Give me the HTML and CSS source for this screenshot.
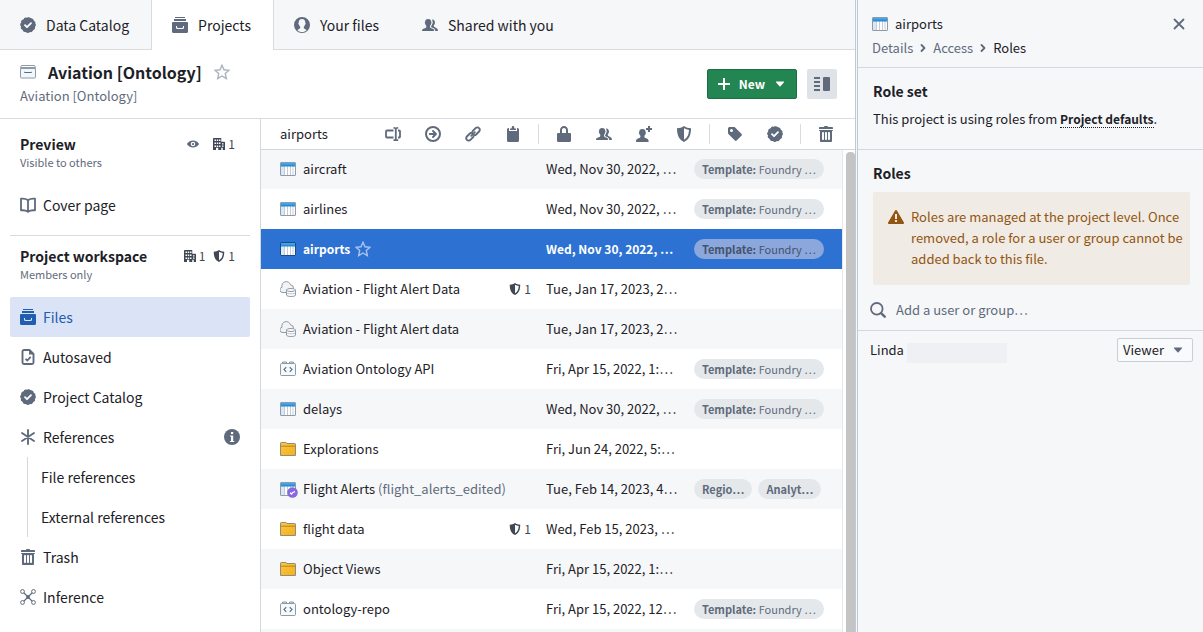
FILE: index.html
```html
<!DOCTYPE html>
<html lang="en">
<head>
<meta charset="utf-8">
<title>Aviation [Ontology] – Projects</title>
<link rel="stylesheet" href="styles.css">
</head>
<body>
<svg class="sprite" aria-hidden="true">
  <defs>
    <linearGradient id="g-blue" x1="0" y1="0" x2="0" y2="1"><stop offset="0" stop-color="#48aff0"/><stop offset="1" stop-color="#1f82cc"/></linearGradient>
    <linearGradient id="g-folder" x1="0" y1="0" x2="1" y2="1"><stop offset="0" stop-color="#fcc641"/><stop offset="1" stop-color="#f2b01e"/></linearGradient>
  </defs>
  <symbol id="endorsed" viewBox="0 0 16 16"><circle cx="8" cy="8" r="7.4"/><circle cx="8" cy="8" r="6.200" fill="none" stroke="currentColor" stroke-width="3.400" stroke-linecap="round" stroke-dasharray="0 3.246"/><path d="M5 8.200l2 2 4-4" fill="none" stroke="#fff" stroke-width="1.800" stroke-linecap="round" stroke-linejoin="round"/></symbol>
  <symbol id="projects" viewBox="0 0 16 16"><path d="M3 0h10v1H3zM2 2h12v2H2z"/><path fill-rule="evenodd" d="M1 5h14a1 1 0 0 1 1 1v8.500a1.500 1.500 0 0 1-1.500 1.500h-13A1.500 1.500 0 0 1 0 14.500V6a1 1 0 0 1 1-1zm3 4v1.500A1.500 1.500 0 0 0 5.500 12h5a1.500 1.500 0 0 0 1.500-1.500V9h-1v1a1 1 0 0 1-1 1H6a1 1 0 0 1-1-1V9z"/></symbol>
  <symbol id="user" viewBox="0 0 16 16"><path fill-rule="evenodd" d="M8 0a8 8 0 1 1 0 16A8 8 0 0 1 8 0zm0 2C5.800 2 4.600 3.600 4.700 5.700c-.5.200-.4 1.500.2 1.900.2 1 .7 1.700 1.300 2.200v1.200c-.3.900-1.700 1.200-2.900 1.900C4.500 14.200 6 15 8 15s3.500-.8 4.700-2.100c-1.200-.7-2.600-1-2.900-1.900V9.800c.6-.5 1.100-1.200 1.300-2.200.6-.4.700-1.700.2-1.900C11.400 3.600 10.200 2 8 2z"/></symbol>
  <symbol id="people" viewBox="0 0 16 16"><path d="M6.200 1.900c2 0 3.100 1.200 3 3.100.5.100.4 1.400-.1 1.800-.2.900-.6 1.500-1.100 2v1.100c.2 1 2 1.300 3.200 2.100.7.400.9 1.200.9 2H0c0-.8.300-1.600 1-2 1.200-.8 3.100-1.100 3.300-2.100V8.800c-.5-.5-.9-1.100-1.100-2-.5-.4-.6-1.700-.1-1.800-.1-1.900 1.100-3.100 3.100-3.100z"/><path d="M9.900 2.500c1.800-.3 2.900.7 2.900 2.600.4.200.3 1.200-.1 1.600-.2.700-.5 1.200-.9 1.600v1c.2.800 1.800 1.200 2.900 1.900.8.500 1.200 1.300 1.300 2.800h-2.800c-.1-1.200-.5-2.100-1.500-2.700-.9-.5-2-.9-2.600-1.400V9c.5-.5.8-1 1-1.700.7-.7.800-2 .4-2.700.1-.8-.1-1.500-.6-2.100z"/></symbol>
  <symbol id="new-person" viewBox="0 0 16 16"><path d="M6.400 3c2.100 0 3.300 1.200 3.200 3.200.5.100.4 1.400-.1 1.700-.2.900-.6 1.400-1.100 1.900V11c.2 1 2.100 1.300 3.300 2.100.7.500.9 1.300.9 2.900H0c0-1.600.300-2.400 1-2.900C2.200 12.300 4.200 12 4.400 11V9.800c-.5-.5-.9-1-1.100-1.900-.5-.3-.6-1.600-.1-1.700C3.100 4.200 4.300 3 6.400 3z"/><path d="M12 0h2v2h2v2h-2v2h-2V4h-2V2h2z"/></symbol>
  <symbol id="project-box" viewBox="0 0 16 16"><path d="M.5 4.500h15V13a1 1 0 0 1-1 1h-13a1 1 0 0 1-1-1z" fill="#f1f8fd" stroke="#8f99a8"/><path d="M1.500 1.500h13l1 2H.5z" fill="#fff" stroke="#8f99a8"/><path d="M4.500 7.800v.7h7v-.7" fill="none" stroke="#5f6b7c"/></symbol>
  <symbol id="star" viewBox="0 0 16 16"><path d="M8 1.300l2 4.500 5 .5-3.700 3.300 1 4.900L8 12l-4.300 2.500 1-4.900L1 6.300l5-.5z" fill="none" stroke="currentColor" stroke-width="1.400" stroke-linejoin="miter"/></symbol>
  <symbol id="plus" viewBox="0 0 16 16"><path d="M7 2h2v5h5v2H9v5H7V9H2V7h5z"/></symbol>
  <symbol id="caret" viewBox="0 0 16 16"><path d="M4.300 5.500h7.400c.4 0 .6.500.3.800L8.500 10.200a.7.7 0 0 1-1 0L4 6.300c-.3-.3-.1-.8.300-.8z"/></symbol>
  <symbol id="detail" viewBox="0 0 16 16"><path d="M0 1h6v2H0zM0 5h6v2H0zM0 9h6v2H0zM0 13h6v2H0z"/><rect x="9" y="1" width="7" height="14" rx="1"/></symbol>
  <symbol id="eye" viewBox="0 0 16 16"><path fill-rule="evenodd" d="M8 3.200c3.700 0 6.500 2.300 7.900 4.400.2.300.2.500 0 .8-1.400 2.100-4.200 4.400-7.900 4.400S1.500 10.500.1 8.400c-.2-.3-.2-.5 0-.8C1.500 5.500 4.300 3.200 8 3.200zM8 5a3 3 0 1 0 0 6 3 3 0 0 0 0-6z"/><circle cx="8" cy="8" r="1.500"/></symbol>
  <symbol id="office" viewBox="0 0 16 16"><path fill-rule="evenodd" d="M1 0h10v5h4a1 1 0 0 1 1 1v10h-3v-3h-2v3H7v-3H4v3H0V1a1 1 0 0 1 1-1zm1 2v2h2V2zm3 0v2h2V2zm3 0v2h2V2zM2 6v2h2V6zm3 0v2h2V6zm3 0v2h2V6zm-6 4v2h2v-2zm3 0v2h2v-2zm3 0v2h2v-2zm4-3v1.500h2V7zm0 3v1.500h2V10z"/></symbol>
  <symbol id="shield" viewBox="0 0 16 16"><path fill-rule="evenodd" d="M8 0c2 1.500 4.300 2.200 7 2.300-.1 6.200-1.200 10.800-7 13.700C2.200 13.100 1.100 8.500 1 2.300 3.700 2.200 6 1.500 8 0zm0 2.300v11.400c3.600-2.200 4.800-5.200 5-9.700-1.900-.200-3.500-.8-5-1.700z"/></symbol>
  <symbol id="book" viewBox="0 0 16 16"><path d="M8 3.200C6.300 1.800 3.700 1.500 1 1.700v11.600c2.700-.2 5.300.1 7 1.500 1.700-1.400 4.300-1.700 7-1.500V1.700c-2.700-.2-5.300.1-7 1.500zm0 0v11.500" fill="none" stroke="currentColor" stroke-width="1.800" stroke-linejoin="round"/></symbol>
  <symbol id="saved" viewBox="0 0 16 16"><path d="M9.500 1H4a1.500 1.500 0 0 0-1.500 1.500v11A1.500 1.500 0 0 0 4 15h8a1.500 1.500 0 0 0 1.500-1.500V5z" fill="none" stroke="currentColor" stroke-width="1.900" stroke-linejoin="round"/><path d="M9 .500L14 5.500H9z"/><path d="M5.500 9.800l1.800 1.700 3.400-3.600" fill="none" stroke="currentColor" stroke-width="1.800"/></symbol>
  <symbol id="asterisk" viewBox="0 0 16 16"><path d="M8 1v14M2 4l12 8M14 4L2 12" fill="none" stroke="currentColor" stroke-width="1.900" stroke-linecap="round"/></symbol>
  <symbol id="info" viewBox="0 0 16 16"><circle cx="8" cy="8" r="8"/><path d="M7 3h2.200v2H7zM6 6.500h3.200V12h1v1H6v-1h1V7.500H6z" fill="#fff"/></symbol>
  <symbol id="trash" viewBox="0 0 16 16"><path fill-rule="evenodd" d="M14.490 3.990h-13c-.28 0-.5.220-.5.500s.22.500.5.500h.5v10c0 .55.45 1 1 1h10c.55 0 1-.45 1-1v-10h.5c.28 0 .5-.22.5-.5s-.22-.5-.5-.5zm-8.500 9c0 .55-.45 1-1 1s-1-.45-1-1v-6c0-.55.45-1 1-1s1 .45 1 1v6zm3 0c0 .55-.45 1-1 1s-1-.45-1-1v-6c0-.55.45-1 1-1s1 .45 1 1v6zm3 0c0 .55-.45 1-1 1s-1-.45-1-1v-6c0-.55.45-1 1-1s1 .45 1 1v6zm2-12h-4c0-.55-.45-1-1-1h-2c-.55 0-1 .45-1 1h-4c-.55 0-1 .45-1 1v1h14v-1c0-.55-.45-1-1-1z"/></symbol>
  <symbol id="graph" viewBox="0 0 16 16"><path d="M3.500 3.500L8 8l4.500-4.500M3.500 12.500L8 8l4.500 4.500" fill="none" stroke="currentColor" stroke-width="1.200"/><circle cx="8" cy="8" r="1.900"/><g fill="#fff" stroke="currentColor"><circle cx="2.500" cy="2.500" r="1.900"/><circle cx="13.500" cy="2.500" r="1.900"/><circle cx="2.500" cy="13.500" r="1.900"/><circle cx="13.500" cy="13.500" r="1.900"/></g></symbol>
  <symbol id="rename" viewBox="0 0 16 16"><path d="M8.500 4.500H2a1 1 0 0 0-1 1v5a1 1 0 0 0 1 1h6.500M13 4.500h1.200a.8.800 0 0 1 .8.800v5.400a.8.800 0 0 1-.8.800H13M8.500 1.800c1.300 0 2.300.2 2.300 1v10.400c0 .8-1 1-2.300 1M13.200 1.800c-1.300 0-2.400.2-2.400 1M10.800 13.200c0 .8 1.100 1 2.400 1" fill="none" stroke="currentColor" stroke-width="1.800"/></symbol>
  <symbol id="move" viewBox="0 0 16 16"><circle cx="8" cy="8" r="7" fill="none" stroke="currentColor" stroke-width="2"/><path d="M4.800 8h5.500M8 5L11 8 8 11" fill="none" stroke="currentColor" stroke-width="1.900" stroke-linecap="round" stroke-linejoin="round"/></symbol>
  <symbol id="link" viewBox="0 0 16 16"><g fill="none" stroke="currentColor" stroke-width="1.900" stroke-linecap="round"><path d="M7.600 5.200l3-3.100a2.400 2.400 0 0 1 3.500 0 2.400 2.400 0 0 1 0 3.400l-3 3a2.400 2.400 0 0 1-2.700.5M8.400 10.800l-3 3.100a2.400 2.400 0 0 1-3.500 0 2.400 2.400 0 0 1 0-3.400l3-3a2.400 2.400 0 0 1 2.700-.5M6.200 9.800l3.600-3.600"/></g></symbol>
  <symbol id="clipboard" viewBox="0 0 16 16"><path d="M4 2v3h8V2h.500A1.500 1.500 0 0 1 14 3.500v11a1.500 1.500 0 0 1-1.500 1.500h-9A1.500 1.500 0 0 1 2 14.500v-11A1.500 1.500 0 0 1 3.500 2z"/><path d="M5 4V2.500h1.500L7 .500A1.200 1.200 0 0 1 9 .500l.5 2H11V4z"/></symbol>
  <symbol id="lock" viewBox="0 0 16 16"><path fill-rule="evenodd" d="M13.960 7H12V3.950C12 1.770 10.210 0 8 0S4 1.770 4 3.950V7H1.960c-.55 0-.96.35-.96.9v6.910c0 .54.41 1.190.96 1.190h12c.55 0 1.040-.65 1.040-1.190V7.900c0-.55-.49-.9-1.040-.9zM6 7V3.950c0-1.090.9-1.970 2-1.970s2 .88 2 1.970V7H6z"/></symbol>
  <symbol id="tag" viewBox="0 0 16 16"><path fill-rule="evenodd" d="M1 2.500A1.500 1.500 0 0 1 2.500 1H7c.4 0 .8.200 1.100.4l6.500 6.500c.5.500.5 1.200 0 1.700l-5 5c-.5.500-1.200.5-1.700 0L1.400 8.100C1.200 7.800 1 7.400 1 7zM4.500 3a1.500 1.500 0 1 0 0 3 1.500 1.500 0 0 0 0-3z"/></symbol>
  <symbol id="table" viewBox="0 0 16 16"><rect x=".5" y="1.500" width="15" height="13" rx=".5" fill="#fff"/><path d="M1 5h3v9H1z" fill="#d6e8f7"/><path d="M4.500 5v9M7.500 5v9M10.500 5v9M13 5v9" stroke="#c5cbd3"/><path d="M1 2h14v3.500H1z" fill="url(#g-blue)"/><rect x=".5" y="1.500" width="15" height="13" rx=".5" fill="none" stroke="currentColor"/></symbol>
  <symbol id="sync" viewBox="0 0 16 16"><path d="M6 11.500H3A2.700 2.700 0 0 1 2 6.200 4.400 4.400 0 0 1 10.500 3.800 3.400 3.400 0 0 1 13.500 7.500" fill="#f1f3f5" stroke="#8f99a8"/><path d="M6.500 9v5c0 2 9 2 9 0V9z" fill="#fff" stroke="#8f99a8"/><ellipse cx="11" cy="9" rx="4.500" ry="1.500" fill="#fff" stroke="#8f99a8"/><path d="M6.500 11.500c0 1.800 9 1.800 9 0" fill="none" stroke="#abb3bf" stroke-width=".8"/></symbol>
  <symbol id="repo" viewBox="0 0 16 16"><path d="M2.500 3V1h4v2M9.500 3V1h4v2" fill="#dbe3ea" stroke="#8f99a8"/><rect x=".5" y="2.500" width="15" height="12" rx="1" fill="#f4f9fc" stroke="#8f99a8"/><path d="M6.300 6.200L4 8.500l2.300 2.300M9.700 6.200L12 8.500l-2.300 2.300" fill="none" stroke="#5f6b7c" stroke-width="1.100"/></symbol>
  <symbol id="folder" viewBox="0 0 16 16"><path d="M.5 2.200c0-.4.300-.7.700-.7h4.600l1.200 1h7.800c.4 0 .7.300.7.700V14.500H.5z" fill="url(#g-folder)" stroke="#8f8c80"/><path d="M1 5.200h14" stroke="#b07f16" stroke-width=".9"/></symbol>
  <symbol id="object-table" viewBox="0 0 19 17"><use href="#table" width="16" height="16"/><circle cx="12.500" cy="11.500" r="5.300" fill="#8768e0"/><path d="M10 11.800l1.500 1.200 1-1.300 2.500-1.200" fill="none" stroke="#fff" stroke-width="1.300"/></symbol>
  <symbol id="cross" viewBox="0 0 16 16"><path d="M3.500 3.500l9 9M12.500 3.500l-9 9" fill="none" stroke="currentColor" stroke-width="1.800" stroke-linecap="round"/></symbol>
  <symbol id="chevron" viewBox="0 0 16 16"><path d="M6.500 5L9.500 8l-3 3" fill="none" stroke="currentColor" stroke-width="1.800" stroke-linecap="round" stroke-linejoin="round"/></symbol>
  <symbol id="warning" viewBox="0 0 16 16"><path fill-rule="evenodd" d="M8 1c.4 0 .7.200.9.500l7 12c.3.700-.1 1.500-.9 1.500H1c-.8 0-1.200-.8-.9-1.500l7-12c.2-.3.500-.5.900-.5zM7 5v5h2V5zm0 6v2h2v-2z"/></symbol>
  <symbol id="search" viewBox="0 0 16 16"><circle cx="6.800" cy="6.800" r="5.800" fill="none" stroke="currentColor" stroke-width="1.800"/><path d="M11.300 11.300l3.400 3.400" fill="none" stroke="currentColor" stroke-width="2.400" stroke-linecap="round"/></symbol>
</svg>

<div class="app">
  <div class="main">
    <nav class="tabs">
      <a class="tab tab-first" href="#"><svg class="icon"><use href="#endorsed"/></svg>Data Catalog</a>
      <a class="tab tab-active" href="#" aria-current="page"><svg class="icon"><use href="#projects"/></svg>Projects</a>
      <a class="tab" href="#"><svg class="icon"><use href="#user"/></svg>Your files</a>
      <a class="tab" href="#"><svg class="icon"><use href="#people"/></svg>Shared with you</a>
    </nav>

    <header class="project">
      <div class="project-info">
        <div class="project-title">
          <svg class="icon"><use href="#project-box"/></svg>
          <h1>Aviation [Ontology]</h1>
          <button class="icon-button star" aria-label="Favorite project"><svg class="icon"><use href="#star"/></svg></button>
        </div>
        <p class="project-path">Aviation [Ontology]</p>
      </div>
      <button class="new-button"><svg class="icon"><use href="#plus"/></svg>New<svg class="icon"><use href="#caret"/></svg></button>
      <button class="view-button" aria-label="Toggle details"><svg class="icon"><use href="#detail"/></svg></button>
    </header>

    <div class="workspace">
      <nav class="sidebar">
        <section class="group">
          <div class="group-head">
            <h2>Preview</h2>
            <svg class="icon-small eye"><use href="#eye"/></svg>
            <span class="count"><svg class="icon-small"><use href="#office"/></svg>1</span>
          </div>
          <p class="group-note">Visible to others</p>
          <a class="item" href="#"><svg class="icon"><use href="#book"/></svg>Cover page</a>
        </section>
        <section class="group group-divided">
          <div class="group-head">
            <h2>Project workspace</h2>
            <span class="count"><svg class="icon-small"><use href="#office"/></svg>1</span>
            <span class="count"><svg class="icon-small"><use href="#shield"/></svg>1</span>
          </div>
          <p class="group-note">Members only</p>
          <a class="item item-active" href="#" aria-current="page"><svg class="icon"><use href="#projects"/></svg>Files</a>
          <a class="item" href="#"><svg class="icon"><use href="#saved"/></svg>Autosaved</a>
          <a class="item" href="#"><svg class="icon"><use href="#endorsed"/></svg>Project Catalog</a>
          <a class="item" href="#"><svg class="icon"><use href="#asterisk"/></svg><span class="grow">References</span><svg class="icon"><use href="#info"/></svg></a>
          <div class="subitems">
            <a class="item" href="#">File references</a>
            <a class="item" href="#">External references</a>
          </div>
          <a class="item" href="#"><svg class="icon"><use href="#trash"/></svg>Trash</a>
          <a class="item" href="#"><svg class="icon"><use href="#graph"/></svg>Inference</a>
        </section>
      </nav>

      <section class="files">
        <div class="toolbar">
          <span class="selection">airports</span>
          <button class="icon-button" aria-label="Rename"><svg class="icon"><use href="#rename"/></svg></button>
          <button class="icon-button" aria-label="Move"><svg class="icon"><use href="#move"/></svg></button>
          <button class="icon-button" aria-label="Copy link"><svg class="icon"><use href="#link"/></svg></button>
          <button class="icon-button" aria-label="Copy to clipboard"><svg class="icon"><use href="#clipboard"/></svg></button>
          <span class="separator"></span>
          <button class="icon-button" aria-label="Lock"><svg class="icon"><use href="#lock"/></svg></button>
          <button class="icon-button" aria-label="Members"><svg class="icon"><use href="#people"/></svg></button>
          <button class="icon-button" aria-label="Add member"><svg class="icon"><use href="#new-person"/></svg></button>
          <button class="icon-button" aria-label="Markings"><svg class="icon"><use href="#shield"/></svg></button>
          <span class="separator"></span>
          <button class="icon-button" aria-label="Tags"><svg class="icon"><use href="#tag"/></svg></button>
          <button class="icon-button" aria-label="Endorse"><svg class="icon"><use href="#endorsed"/></svg></button>
          <span class="separator"></span>
          <button class="icon-button" aria-label="Delete"><svg class="icon"><use href="#trash"/></svg></button>
        </div>
        <div class="listing">
          <table class="table">
            <colgroup><col><col class="col-date"><col class="col-tags"></colgroup>
            <tbody>
              <tr><td><div class="name"><svg class="icon"><use href="#table"/></svg>aircraft</div></td><td>Wed, Nov 30, 2022, …</td><td><div class="tags"><span class="tag"><b>Template:</b> Foundry …</span></div></td></tr>
              <tr><td><div class="name"><svg class="icon"><use href="#table"/></svg>airlines</div></td><td>Wed, Nov 30, 2022, …</td><td><div class="tags"><span class="tag"><b>Template:</b> Foundry …</span></div></td></tr>
              <tr class="selected"><td><div class="name"><svg class="icon"><use href="#table"/></svg>airports<svg class="icon row-star"><use href="#star"/></svg></div></td><td>Wed, Nov 30, 2022, …</td><td><div class="tags"><span class="tag"><b>Template:</b> Foundry …</span></div></td></tr>
              <tr><td><div class="name"><svg class="icon"><use href="#sync"/></svg><span class="grow">Aviation - Flight Alert Data</span><span class="count"><svg class="icon-small"><use href="#shield"/></svg>1</span></div></td><td>Tue, Jan 17, 2023, 2…</td><td></td></tr>
              <tr><td><div class="name"><svg class="icon"><use href="#sync"/></svg>Aviation - Flight Alert data</div></td><td>Tue, Jan 17, 2023, 2…</td><td></td></tr>
              <tr><td><div class="name"><svg class="icon"><use href="#repo"/></svg>Aviation Ontology API</div></td><td>Fri, Apr 15, 2022, 1:…</td><td><div class="tags"><span class="tag"><b>Template:</b> Foundry …</span></div></td></tr>
              <tr><td><div class="name"><svg class="icon"><use href="#table"/></svg>delays</div></td><td>Wed, Nov 30, 2022, …</td><td><div class="tags"><span class="tag"><b>Template:</b> Foundry …</span></div></td></tr>
              <tr><td><div class="name"><svg class="icon"><use href="#folder"/></svg>Explorations</div></td><td>Fri, Jun 24, 2022, 5:…</td><td></td></tr>
              <tr><td><div class="name"><svg class="icon icon-badged"><use href="#object-table"/></svg><span>Flight Alerts <span class="muted">(flight_alerts_edited)</span></span></div></td><td>Tue, Feb 14, 2023, 4…</td><td><div class="tags"><span class="tag"><b>Regio…</b></span><span class="tag"><b>Analyt…</b></span></div></td></tr>
              <tr><td><div class="name"><svg class="icon"><use href="#folder"/></svg><span class="grow">flight data</span><span class="count"><svg class="icon-small"><use href="#shield"/></svg>1</span></div></td><td>Wed, Feb 15, 2023, …</td><td></td></tr>
              <tr><td><div class="name"><svg class="icon"><use href="#folder"/></svg>Object Views</div></td><td>Fri, Apr 15, 2022, 1:…</td><td></td></tr>
              <tr><td><div class="name"><svg class="icon"><use href="#repo"/></svg>ontology-repo</div></td><td>Fri, Apr 15, 2022, 12…</td><td><div class="tags"><span class="tag"><b>Template:</b> Foundry …</span></div></td></tr>
              <tr><td></td><td></td><td></td></tr>
            </tbody>
          </table>
          <div class="scroll-track"><div class="scroll-thumb"></div></div>
        </div>
      </section>
    </div>
  </div>

  <aside class="panel">
    <header class="panel-head">
      <div class="panel-title"><svg class="icon"><use href="#table"/></svg><span class="grow">airports</span><button class="icon-button" aria-label="Close"><svg class="icon"><use href="#cross"/></svg></button></div>
      <nav class="crumbs"><a href="#">Details</a><svg class="icon"><use href="#chevron"/></svg><a href="#">Access</a><svg class="icon"><use href="#chevron"/></svg><span>Roles</span></nav>
    </header>
    <section class="role-set">
      <h3>Role set</h3>
      <p>This project is using roles from <a class="defaults" href="#">Project defaults</a>.</p>
    </section>
    <section class="roles">
      <h3>Roles</h3>
      <div class="callout"><svg class="icon"><use href="#warning"/></svg><p>Roles are managed at the project level. Once removed, a role for a user or group cannot be added back to this file.</p></div>
      <label class="add-user"><svg class="icon"><use href="#search"/></svg><input type="text" placeholder="Add a user or group…" aria-label="Add a user or group"></label>
      <div class="member">
        <label for="role">Linda</label><span class="redacted"></span>
        <span class="select"><select id="role"><option>Viewer</option><option>Editor</option><option>Owner</option></select><svg class="icon"><use href="#caret"/></svg></span>
      </div>
    </section>
  </aside>
</div>
</body>
</html>
```
FILE: styles.css
```css
* { box-sizing: border-box; }

body {
  margin: 0;
  font-family: "Noto Sans CJK KR", "Noto Sans", sans-serif;
  font-size: 13px;
  line-height: 20px;
  color: #1c2127;
  background: #fff;
}

h1, h2, h3, p { margin: 0; }
h1, h2, h3, b { font-weight: 600; }
a { color: inherit; text-decoration: none; }
button, input, select { font: inherit; color: inherit; }

.sprite { position: absolute; width: 0; height: 0; }
.icon { width: 16px; height: 16px; flex: none; fill: currentColor; color: #5f6b7c; }
.icon-small { width: 12px; height: 12px; flex: none; fill: currentColor; }
.grow { flex: 1; }
.muted { color: #5f6b7c; }

.icon-button {
  display: flex;
  align-items: center;
  justify-content: center;
  width: 30px;
  height: 30px;
  padding: 0;
  border: 0;
  background: none;
}

.app { display: flex; height: 100vh; overflow: hidden; }
.main { flex: 1; min-width: 0; display: flex; flex-direction: column; }

/* Top tabs */
.tabs {
  display: flex;
  flex: none;
  height: 50px;
  background: #f6f7f9;
  border-bottom: 1px solid #d9dbde;
  font-size: 14px;
}
.tab {
  display: flex;
  align-items: center;
  gap: 10px;
  height: 49px;
  padding: 0 22px 0 20px;
  border-right: 1px solid transparent;
  white-space: nowrap;
}
.tab-first { border-right-color: #d9dbde; }
.tab-active { height: 50px; padding-bottom: 1px; background: #fff; border-right-color: #d9dbde; }

/* Project header */
.project {
  display: flex;
  align-items: center;
  flex: none;
  gap: 10px;
  height: 69px;
  padding: 0 18px 0 20px;
  border-bottom: 1px solid #d9dbde;
}
.project-info { flex: 1; padding-bottom: 4px; }
.project-title { display: flex; align-items: center; gap: 12px; height: 28px; }
.project-title h1 { font-size: 16px; }
.project-path { font-size: 13px; color: #5f6b7c; }
.star { width: 16px; }
.star .icon { color: #abb3bf; }
.new-button {
  display: flex;
  align-items: center;
  height: 30px;
  padding: 0 8px;
  border: 1px solid #1c6e42;
  border-radius: 2px;
  background: #238551;
  color: #fff;
  font-size: 12px;
  font-weight: 600;
  gap: 7px;
}
.new-button .icon { color: #fff; }
.view-button {
  display: flex;
  align-items: center;
  justify-content: center;
  width: 30px;
  height: 30px;
  padding: 0;
  border: 0;
  border-radius: 2px;
  background: #dfe2e6;
}

.workspace { display: flex; flex: 1; min-height: 0; }

/* Sidebar */
.sidebar {
  flex: none;
  width: 261px;
  padding: 15px 10px 0;
  border-right: 1px solid #d3d8de;
}
.group-divided { margin-top: 10px; padding-top: 10px; border-top: 1px solid #d9dbde; }
.group-head { display: flex; align-items: center; gap: 8px; padding: 0 15px 0 10px; }
.group-head h2 { flex: 1; font-size: 14px; line-height: 20px; }
.eye { color: #5f6b7c; margin-right: 6px; }
.count { display: flex; align-items: center; gap: 3px; font-size: 12px; line-height: 16px; color: #404854; }
.group-note { padding: 0 10px 15px; font-size: 11px; line-height: 16px; color: #5f6b7c; }
.item {
  display: flex;
  align-items: center;
  gap: 7px;
  height: 40px;
  padding: 0 10px;
  border-radius: 2px;
  font-size: 14px;
}
.item-active, .item-active .icon { color: #215db0; }
.item-active { background: #dbe3f6; }
.subitems { margin-left: 17px; padding-left: 3px; border-left: 1px solid #d3d8de; }

/* File list */
.files { flex: 1; min-width: 0; display: flex; flex-direction: column; }
.toolbar {
  position: relative;
  display: flex;
  align-items: center;
  flex: none;
  gap: 10px;
  height: 31px;
  margin-bottom: -1px;
  padding: 0 14px 0 19px;
  border-bottom: 1px solid #d3d8de;
}
.selection { flex: 1; }
.separator { width: 1px; height: 20px; background: #d9dbde; }
.listing { display: flex; flex: 1; min-height: 0; overflow: hidden; }
.table { flex: 1; table-layout: fixed; border-collapse: collapse; height: max-content; }
.col-date, .col-tags { width: 148px; }
.table td { height: 40px; padding: 0; white-space: nowrap; }
.table tr:nth-child(odd) { background: #f6f7f9; }
.table tr.selected { background: #2d72d2; color: #fff; font-size: 12px; font-weight: 600; }
.name { display: flex; align-items: center; gap: 7px; padding: 0 15px 0 19px; }
.name .icon { color: #8f99a8; }
.selected .name .icon { color: #184a90; }
.name .icon-badged { width: 19px; height: 17px; margin-right: -3px; }
.selected .name .row-star { margin-left: -2px; color: #a9c4ee; }
.tags { display: flex; gap: 6px; }
.tag {
  padding: 0 8px;
  border-radius: 10px;
  background: #e5e8eb;
  color: #5f6b7c;
  font-size: 11px;
  font-weight: 400;
}
.selected .tag { background: #8ba7dc; color: #44536e; }
.scroll-track {
  flex: none;
  width: 13px;
  padding: 3px 0 0 3px;
  border-left: 1px solid #e5e8eb;
}
.scroll-thumb { height: 100%; border-radius: 4px 4px 0 0; background: #c4c4c4; }

/* Details panel */
.panel {
  flex: none;
  width: 348px;
  border-left: 3px double #c0cad6;
  background: #f6f7f9;
}
.panel-head { height: 68px; padding: 9px 9px 0 14px; border-bottom: 1px solid #d3d8de; }
.panel-title { display: flex; align-items: center; gap: 7px; height: 30px; }
.panel-title > .icon { color: #8f99a8; }
.crumbs { display: flex; align-items: center; gap: 2px; height: 18px; }
.crumbs a { color: #5f6b7c; }
.panel h3 { font-size: 14px; }
.role-set { height: 82px; padding: 13px 15px 0; border-bottom: 1px solid #d3d8de; }
.role-set p { margin-top: 8px; }
.defaults { font-size: 12px; font-weight: 600; border-bottom: 1px dotted #1c2127; }
.roles > h3 { padding: 13px 15px 9px; }
.callout {
  display: flex;
  gap: 7px;
  margin: 0 13px 0 15px;
  padding: 14px 4px 16px 15px;
  border-radius: 2px;
  background: #f0ebe5;
  color: #935610;
  line-height: 21px;
}
.callout .icon { margin-top: 3px; color: #935610; }
.add-user {
  display: flex;
  align-items: center;
  gap: 10px;
  height: 46px;
  padding: 5px 12px 0;
  border-bottom: 1px solid #d3d8de;
}
.add-user input { flex: 1; padding: 0; border: 0; outline: 0; background: none; }
.add-user input::placeholder { color: #5f6b7c; opacity: 1; }
.member { display: flex; align-items: center; height: 38px; padding: 0 10px 0 12px; }
.redacted { width: 100px; height: 20px; margin: 6px auto 0 3px; background: #eff0f3; }
.select { position: relative; display: block; }
.select select {
  appearance: none;
  width: 76px;
  height: 24px;
  padding: 0 5px;
  border: 1px solid #c9ced5;
  border-radius: 2px;
  background: #f9fafb;
  line-height: 20px;
}
.select .icon { position: absolute; top: 4px; right: 7px; pointer-events: none; }
```
